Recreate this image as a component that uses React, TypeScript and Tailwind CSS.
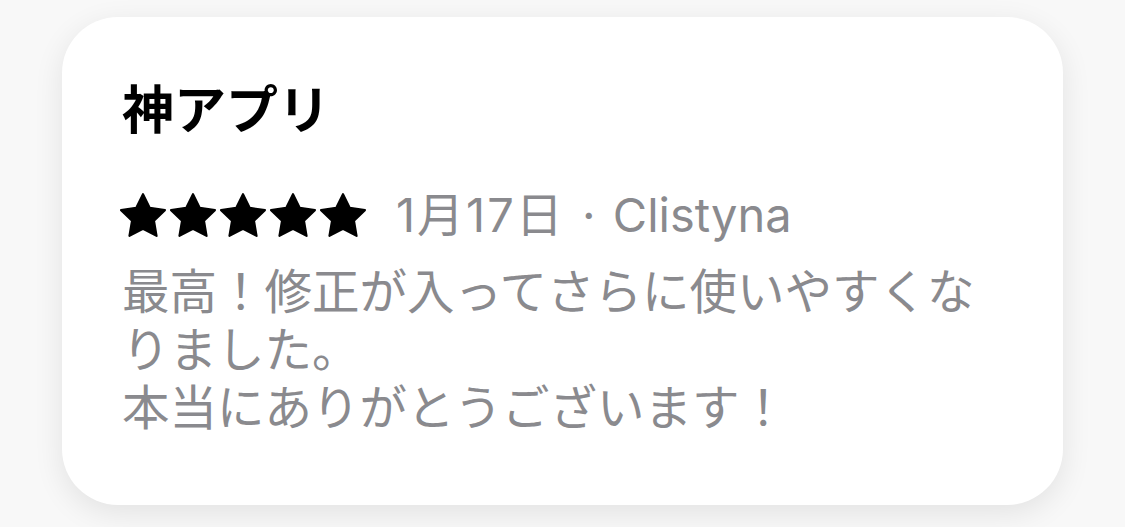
import React from 'react';

const Star: React.FC = () => (
  <svg viewBox="1.5 1.5 21 20" className="w-[46px] h-[44px]" fill="#000">
    <path
      d="M12 2l3.09 6.26L22 9.27l-5 4.87 1.18 6.88L12 17.77l-6.18 3.25L7 14.14 2 9.27l6.91-1.01L12 2z"
      stroke="#000"
      strokeWidth="1"
      strokeLinejoin="round"
    />
  </svg>
);

const App: React.FC = () => {
  const font = { fontFamily: '"Inter", "Noto Sans CJK JP", sans-serif' };

  return (
    <div className="w-[1125px] h-[527px] bg-[#f8f8f8] pt-[17px] pl-[62px] overflow-hidden" style={font}>
      <div className="w-[1001px] h-[488px] bg-white rounded-[56px] shadow-[0_8px_30px_rgba(0,0,0,0.09)] pt-[68px] pl-[60px] pr-[58px]">
        {/* Title */}
        <h1 className="text-[52px] leading-none font-bold text-black">神アプリ</h1>

        {/* Rating + date */}
        <div className="flex items-center mt-[54px]">
          <div className="flex gap-[4px] -ml-[2px]">
            <Star />
            <Star />
            <Star />
            <Star />
            <Star />
          </div>
          <span className="ml-[30px] text-[47px] leading-none text-[#8a8a8e]">
            <span className="tracking-[2px]">1月17日</span>
            <span className="mx-[4px]"> · </span>
            Clistyna
          </span>
        </div>

        {/* Body */}
        <p className="mt-[25px] text-[47.5px] leading-[58px] text-[#8a8a8e]">
          最高！修正が入ってさらに使いやすくなりました。
          <br />
          本当にありがとうございます！
        </p>
      </div>
    </div>
  );
};

export default App;
